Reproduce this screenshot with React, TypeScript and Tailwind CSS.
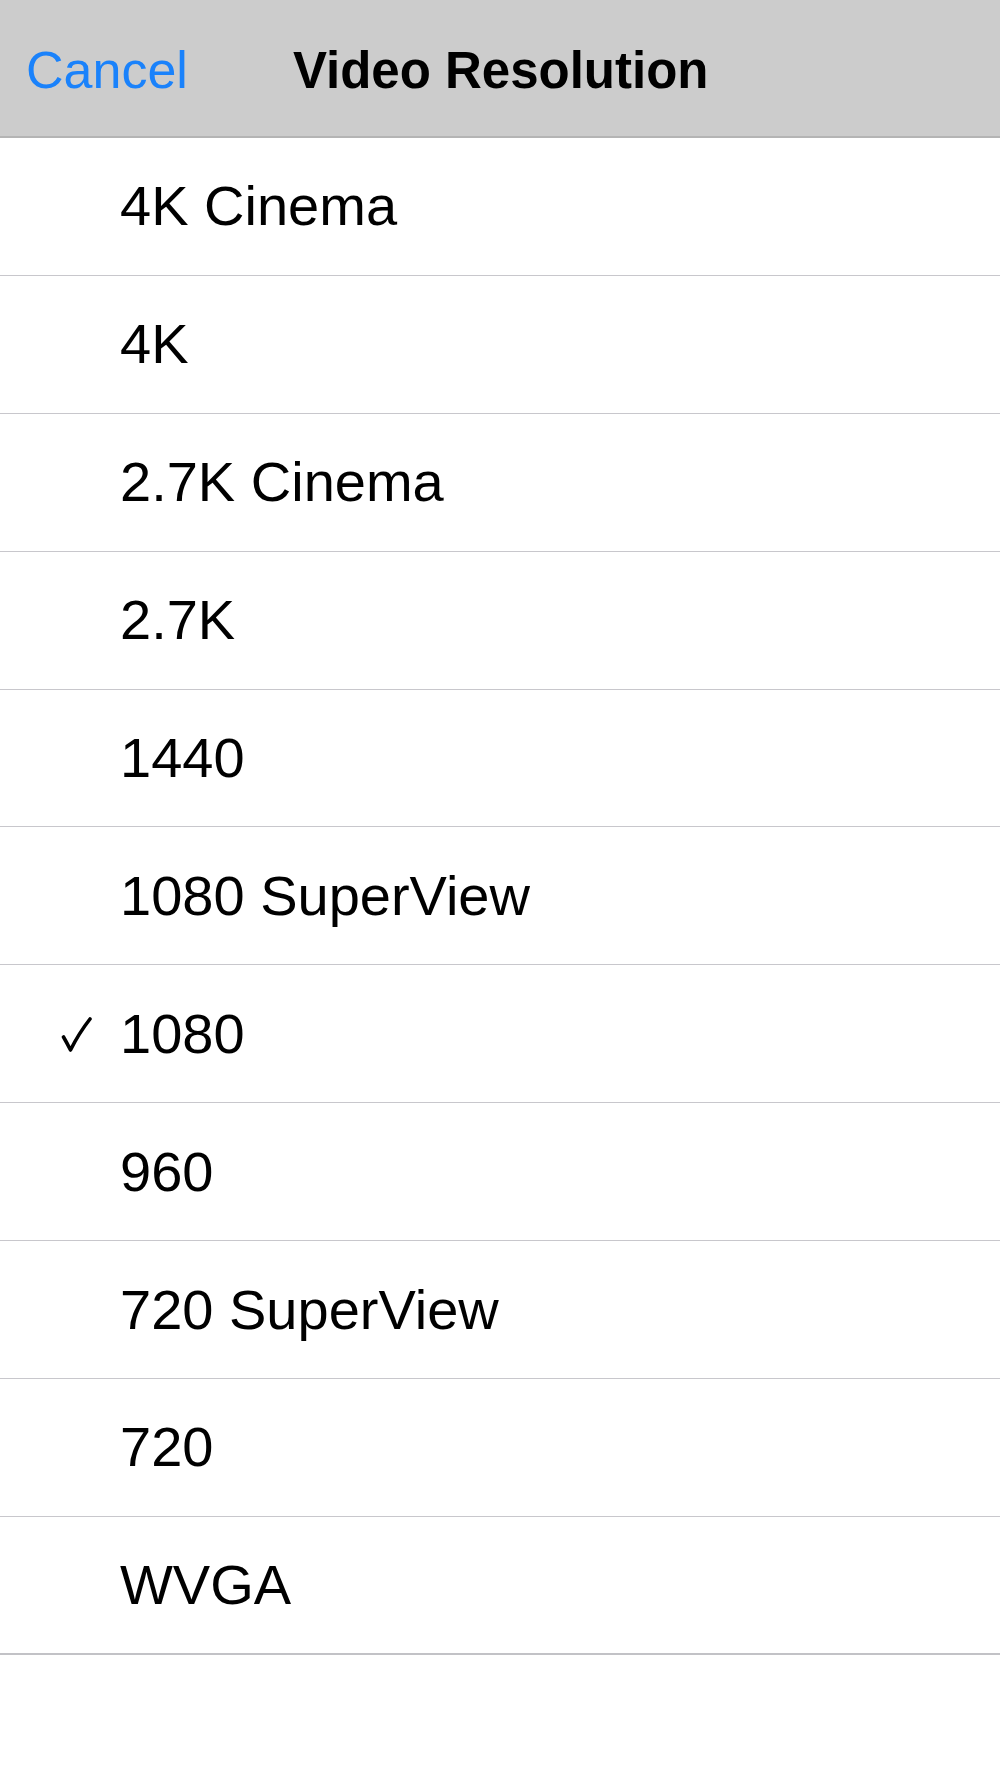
export default function App() {
  const options = [
    "4K Cinema",
    "4K",
    "2.7K Cinema",
    "2.7K",
    "1440",
    "1080 SuperView",
    "1080",
    "960",
    "720 SuperView",
    "720",
    "WVGA",
  ];
  const selected = "1080";

  return (
    <div
      className="w-[1000px] h-[1778px] bg-white overflow-hidden"
      style={{ fontFamily: '"Liberation Sans", Arial, sans-serif' }}
    >
      {/* Nav bar */}
      <div className="h-[138px] pt-[4px] bg-[#cccccc] border-b-2 border-[#b4b4b4] flex items-center">
        <span className="ml-[26px] text-[52px] text-[#1a82fb] leading-none">
          Cancel
        </span>
        <span className="ml-[105px] text-[51px] font-bold text-black leading-none">
          Video Resolution
        </span>
      </div>

      {/* Options */}
      <div>
        {options.map((opt, i) => (
          <div
            key={opt}
            className={
              i === options.length - 1
                ? "h-[137.9px] flex items-center border-b-2 border-[#c2c2c6]"
                : "h-[137.9px] flex items-center border-b border-[#c8c7cc]"
            }
          >
            <div className="w-[120px] flex justify-start">
              {opt === selected && (
                <svg
                  className="ml-[61px] mt-[2px]"
                  width="31"
                  height="36"
                  viewBox="0 0 31 36"
                  fill="none"
                >
                  <path
                    d="M2.5 20 Q6 26 9.5 33 Q18 16 29 2"
                    stroke="black"
                    strokeWidth="3.6"
                    strokeLinecap="round"
                    strokeLinejoin="round"
                  />
                </svg>
              )}
            </div>
            <span className="text-[56px] text-black leading-none">{opt}</span>
          </div>
        ))}
      </div>
    </div>
  );
}
